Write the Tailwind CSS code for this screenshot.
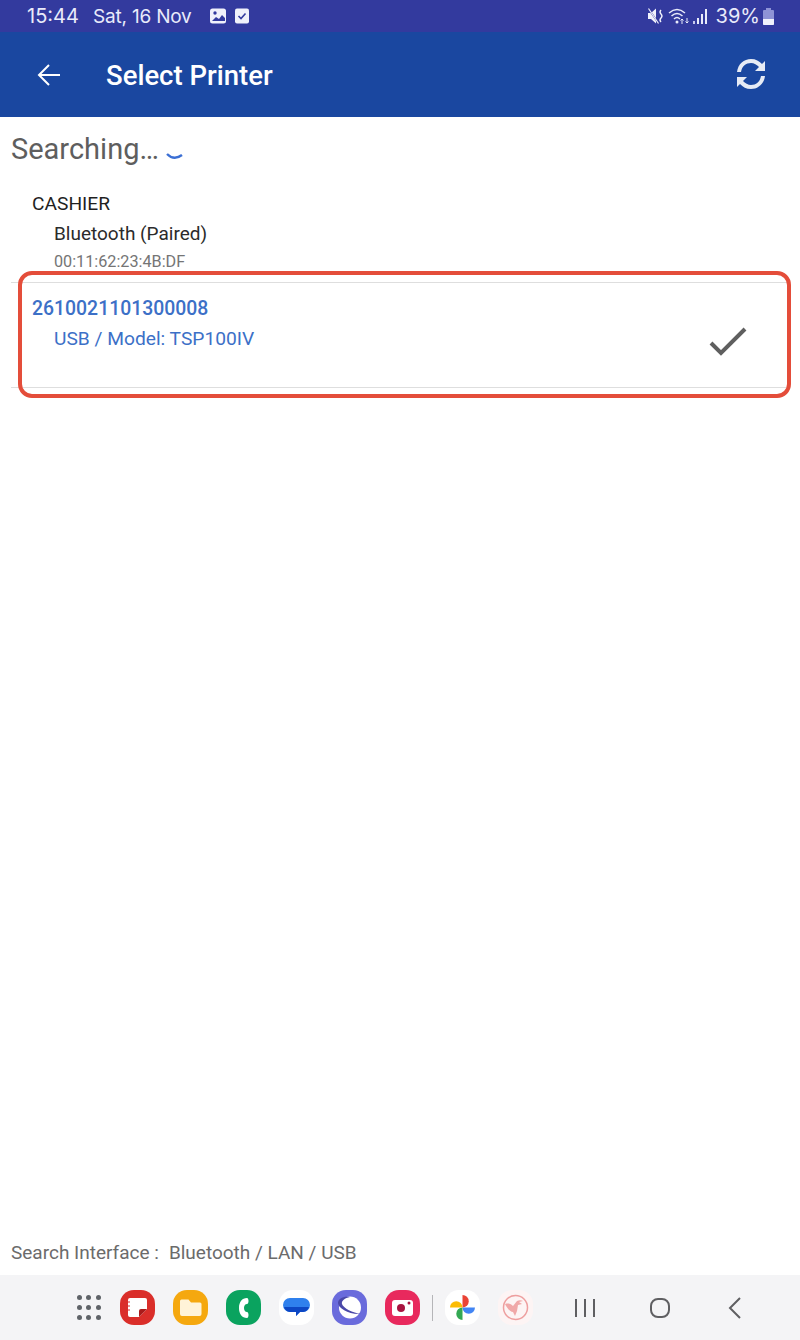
<!DOCTYPE html>
<html>
<head>
<meta charset="utf-8">
<script src="https://cdn.jsdelivr.net/npm/@tailwindcss/browser@4"></script>
</head>
<body class="m-0 bg-white">
<div class="relative w-[800px] h-[1340px] flex flex-col overflow-hidden bg-white font-['Roboto',sans-serif]">
  <!-- status bar -->
  <div class="h-[32px] shrink-0 bg-[#333a9e] flex items-center text-[#e9ebfa] pl-[27px] pr-[29px]">
    <span class="font-['Inter',sans-serif] text-[20px] leading-none w-[66px]">15:44</span>
    <span class="font-['Inter',sans-serif] text-[19px] leading-none tracking-[-0.2px] w-[117px]">Sat, 16 Nov</span>
    <svg width="17" height="16" viewBox="0 0 17 16" class="mr-[8px]"><rect width="16" height="15" y="0.5" rx="2.5" fill="#f0f1fb"/><circle cx="5" cy="5" r="1.7" fill="#333a9e"/><path d="M2 13l4-4 3 2 3-4 3 3v3z" fill="#333a9e"/></svg>
    <svg width="14" height="16" viewBox="0 0 14 16"><rect width="14" height="15" y="0.5" rx="2" fill="#f0f1fb"/><path d="M3.5 8l2.5 2.5 4.500-5" fill="none" stroke="#333a9e" stroke-width="1.6"/></svg>
    <div class="flex-1"></div>
    <svg width="17" height="19" viewBox="0 0 17 19" class="mr-[4px]"><path d="M1 6h3l5-4.500v15L4 12H1z" fill="#f0f1fb"/><path d="M1 1l11 16" stroke="#333a9e" stroke-width="1.5"/><path d="M1.500 1.500l10 15" stroke="#f0f1fb" stroke-width="1.2"/><path d="M14 3q-2 2 0 4t0 4 0 4" fill="none" stroke="#f0f1fb" stroke-width="1.4"/></svg>
    <svg width="22" height="18" viewBox="0 0 22 18" class="mr-[3px]"><path d="M1 6q8-7 16 0M3.500 9q5.500-5 11 0M6 12q3-3 6 0" fill="none" stroke="#e9ebfa" stroke-width="1.5"/><circle cx="9" cy="15" r="1.500" fill="#e9ebfa"/><path d="M14 17v-5m0 0l-1.500 1.500M14 12l1.500 1.500M19 11v5m0 0l-1.500-1.500M19 16l1.500-1.500" fill="none" stroke="#e9ebfa" stroke-width="1"/></svg>
    <svg width="15" height="17" viewBox="0 0 15 17" class="mr-[8px]"><rect x="0" y="13" width="2" height="3" fill="#c6c9ee"/><rect x="4" y="10" width="2" height="6" fill="#e9ebfa"/><rect x="8" y="6" width="2" height="10" fill="#e9ebfa"/><rect x="12" y="1" width="2" height="15" fill="#e9ebfa"/></svg>
    <span class="font-['Inter',sans-serif] text-[20px] leading-none mr-[3px]">39%</span>
    <svg width="11" height="17" viewBox="0 0 11 17" class="-mr-[3px]"><path d="M3 0h5v2h2a1 1 0 0 1 1 1v13a1 1 0 0 1-1 1H1a1 1 0 0 1-1-1V3a1 1 0 0 1 1-1h2z" fill="#8e93d6"/><path d="M0 11h11v5a1 1 0 0 1-1 1H1a1 1 0 0 1-1-1z" fill="#f0f1fb"/></svg>
  </div>
  <!-- app bar -->
  <div class="h-[85px] shrink-0 bg-[#1a47a0] flex items-center text-white">
    <svg width="24" height="24" viewBox="0 0 24 24" class="ml-[37px] mr-[45px]" fill="none" stroke="#fff" stroke-width="2"><path d="M23 12H2M12 2L2 12l10 10"/></svg>
    <span class="text-[27.5px] font-medium leading-none flex-1 pt-[2px]">Select Printer</span>
    <svg width="36" height="36" viewBox="0 0 36 36" class="mr-[31px] -mt-[2px]" fill="#e6ebf5"><path d="M4 16C5 8 11 3 18 3c5 0 8 2 11 5l3-3v10H22l4-4c-2-2-5-4-8-4-5 0-9 3-10 9z"/><path d="M32 20c-1 8-7 13-14 13-5 0-8-2-11-5l-3 3V21h10l-4 4c2 2 5 4 8 4 5 0 9-3 10-9z"/></svg>
  </div>
  <!-- content -->
  <div class="flex-1 flex flex-col min-h-0">
    <div class="h-[64px] shrink-0 pl-[11px] flex items-center">
      <span class="text-[29px] leading-none text-[#5e5e5e]">Searching…</span>
      <svg width="20" height="10" viewBox="0 0 20 10" class="ml-[6px] mt-[16px]"><path d="M2 2q7 7 15 1" fill="none" stroke="#3b6fd4" stroke-width="2.400"/></svg>
    </div>
    <div class="mx-[11px] h-[102px] shrink-0 pl-[21px] border-b border-[#dedede]">
      <div class="text-[19.2px] leading-[24px] text-[#1f1f1f] mt-[11px]">CASHIER</div>
      <div class="pl-[22px] text-[19px] leading-[24px] text-[#2b2b2b] mt-[6px]">Bluetooth (Paired)</div>
      <div class="pl-[22px] text-[16.2px] leading-[20px] text-[#757575] mt-[6px]">00:11:62:23:4B:DF</div>
    </div>
    <div class="mx-[11px] h-[105px] shrink-0 pl-[21px] pr-[42px] border-b border-[#dedede] flex items-center justify-between text-[#3c70c7]">
      <div class="self-start">
        <div class="text-[19.4px] leading-[24px] font-medium mt-[14px]">2610021101300008</div>
        <div class="pl-[22px] text-[19.2px] leading-[24px] mt-[6px]">USB / Model: TSP100IV</div>
      </div>
      <svg width="40" height="32" viewBox="0 0 40 32" class="mt-[12px]"><path d="M4 18l10 10L38 4" fill="none" stroke="#5f5f5f" stroke-width="4"/></svg>
    </div>
    <div class="flex-1"></div>
    <div class="h-[46px] shrink-0 pl-[11px] pt-[2px] flex items-center gap-[10px] text-[19px] text-[#6b6b6b]">
      <span>Search Interface :</span><span>Bluetooth / LAN / USB</span>
    </div>
  </div>
  <!-- nav bar -->
  <div class="h-[65px] shrink-0 bg-[#f4f4f6] flex items-center pl-[77px]">
    <div class="grid grid-cols-3 gap-[5px] w-[23px] mr-[20px]">
      <i class="w-[5px] h-[5px] rounded-full bg-[#5f6368]"></i><i class="w-[5px] h-[5px] rounded-full bg-[#5f6368]"></i><i class="w-[5px] h-[5px] rounded-full bg-[#5f6368]"></i>
      <i class="w-[5px] h-[5px] rounded-full bg-[#5f6368]"></i><i class="w-[5px] h-[5px] rounded-full bg-[#5f6368]"></i><i class="w-[5px] h-[5px] rounded-full bg-[#5f6368]"></i>
      <i class="w-[5px] h-[5px] rounded-full bg-[#5f6368]"></i><i class="w-[5px] h-[5px] rounded-full bg-[#5f6368]"></i><i class="w-[5px] h-[5px] rounded-full bg-[#5f6368]"></i>
    </div>
    <div class="flex items-center gap-[18px]">
      <svg width="35" height="35" viewBox="0 0 35 35"><rect width="35" height="35" rx="14" fill="#da2e2a"/><path d="M10 8h15a2 2 0 0 1 2 2v9l-8 8h-9a2 2 0 0 1-2-2V10a2 2 0 0 1 2-2z" fill="#fff"/><path d="M27 19h-6a2 2 0 0 0-2 2v6z" fill="#a91b1b"/><path d="M7 12h3M7 16h3M7 20h3" stroke="#da2e2a" stroke-width="1.200"/></svg>
      <svg width="35" height="35" viewBox="0 0 35 35"><rect width="35" height="35" rx="14" fill="#f5a80f"/><path d="M7 11a1.500 1.500 0 0 1 1.500-1.500h7l2.500 3h9a1.500 1.500 0 0 1 1.500 1.500v10a2 2 0 0 1-2 2H9a2 2 0 0 1-2-2z" fill="#fff3d8"/></svg>
      <svg width="35" height="35" viewBox="0 0 35 35"><rect width="35" height="35" rx="14" fill="#0aa35f"/><path d="M21 8c-5 0-8 4-8 10s3 10 8 10c2 0 2-6 0-6-2 0-3-2-3-4s1-4 3-4c2 0 2-6 0-6z" fill="#fff"/></svg>
      <svg width="35" height="35" viewBox="0 0 35 35"><rect width="35" height="35" rx="14" fill="#fff"/><path d="M11 8h13a7 7 0 0 1 7 7 7 7 0 0 1-7 7h-3l-4 4v-4h-6a7 7 0 0 1-7-7 7 7 0 0 1 7-7z" fill="#2f80ed"/><path d="M5 17h25a7 7 0 0 1-6 5h-3l-4 4v-4h-6a7 7 0 0 1-6-5z" fill="#0d47c4"/></svg>
      <svg width="35" height="35" viewBox="0 0 35 35"><rect width="35" height="35" rx="14" fill="#6a6bdc"/><circle cx="18" cy="17.500" r="11" fill="#fff"/><path d="M18 7c-7-1-12 2-12 6 0 5 11 12 23 11-8-1-18-6-19-10-1-3 3-6 8-7z" fill="#4a48a8"/></svg>
      <svg width="35" height="35" viewBox="0 0 35 35"><rect width="35" height="35" rx="14" fill="#e8295d"/><rect x="7" y="10" width="21" height="16" rx="3" fill="#fff"/><circle cx="16" cy="18" r="4" fill="#a81440"/><circle cx="24" cy="13" r="1.500" fill="#a81440"/></svg>
    </div>
    <div class="w-[1px] h-[26px] bg-[#b5b5b8] mx-[12px]"></div>
    <svg width="35" height="35" viewBox="0 0 35 35" class="mr-[18px]"><rect width="35" height="35" rx="14" fill="#fff"/><path d="M17.500 5a6.250 6.250 0 0 1 0 12.500z" fill="#ea4335"/><path d="M30 17.500a6.250 6.250 0 0 1-12.500 0z" fill="#4285f4"/><path d="M17.500 30a6.250 6.250 0 0 1 0-12.500z" fill="#34a853"/><path d="M5 17.500a6.250 6.250 0 0 1 12.500 0z" fill="#fbbc04"/></svg>
    <svg width="35" height="35" viewBox="0 0 35 35"><rect width="35" height="35" rx="14" fill="#fdf4f4"/><circle cx="17.500" cy="17.500" r="12" fill="none" stroke="#ee9f9f" stroke-width="1.500"/><path d="M7 14c4-1 6 0 8 2l4-5c2-1 4-1 6 0l-4 1 3 2-4 1-1 6-2 5-2-4c-3 0-6-4-8-8z" fill="#f0a8a8"/></svg>
    <div class="flex items-center ml-[41px]">
      <svg width="22" height="20" viewBox="0 0 22 20" fill="#5f5f62"><rect x="1" y="1" width="2" height="18"/><rect x="10" y="1" width="2" height="18"/><rect x="19" y="1" width="2" height="18"/></svg>
      <svg width="22" height="22" viewBox="0 0 22 22" class="ml-[53px]" fill="none" stroke="#5f5f62" stroke-width="2"><rect x="2" y="2" width="18" height="18" rx="7"/></svg>
      <svg width="14" height="22" viewBox="0 0 14 22" class="ml-[57px]" fill="none" stroke="#5f5f62" stroke-width="2"><path d="M12 1L2 11l10 10"/></svg>
    </div>
  </div>
  <!-- annotation highlight overlay -->
  <div class="absolute left-[18px] top-[271px] w-[773px] h-[127px] border-4 border-[#e44d3a] rounded-[14px]"></div>
</div>
</body>
</html>
